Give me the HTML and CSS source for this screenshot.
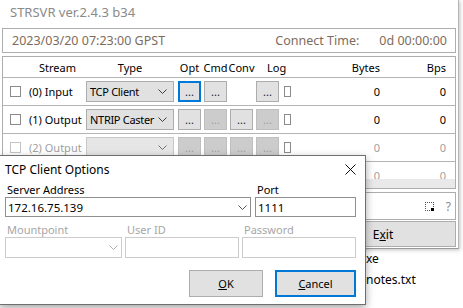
FILE: index.html
```html
<!DOCTYPE html>
<html lang="en">

<head>
    <meta charset="UTF-8">
    <title>STRSVR</title>
    <link rel="stylesheet" href="styles.css">
</head>

<body>

    <!-- Main window -->
    <div class="app">
        <div class="app-title">STRSVR ver.2.4.3 b34</div>

        <div class="timebar">
            <span>2023/03/20 07:23:00 GPST</span>
            <span class="conn"><span>Connect Time:</span><span>0d 00:00:00</span></span>
        </div>

        <!-- Streams table -->
        <div class="streams">
            <div class="rows">
                <div class="srow shead">
                    <span class="h-stream">Stream</span>
                    <span class="h-type">Type</span>
                    <span class="h-btn">Opt</span>
                    <span class="h-btn">Cmd</span>
                    <span class="h-btn">Conv</span>
                    <span class="h-log">Log</span>
                    <span class="num">Bytes</span>
                    <span class="num">Bps</span>
                </div>

                <div class="srow">
                    <span class="chk"></span>
                    <span class="name">(0) Input</span>
                    <div class="combo"><span>TCP Client</span><svg width="9" height="5" viewBox="0 0 9 5"><polyline points="0.5,0.5 4.5,4.5 8.5,0.5" fill="none" stroke="#404040"/></svg></div>
                    <button class="dots focus">...</button>
                    <button class="dots">...</button>
                    <span></span>
                    <button class="dots">...</button>
                    <span class="ind"></span>
                    <span class="num">0</span>
                    <span class="num">0</span>
                </div>

                <div class="srow">
                    <span class="chk"></span>
                    <span class="name">(1) Output</span>
                    <div class="combo"><span>NTRIP Caster</span><svg width="9" height="5" viewBox="0 0 9 5"><polyline points="0.5,0.5 4.5,4.5 8.5,0.5" fill="none" stroke="#404040"/></svg></div>
                    <button class="dots">...</button>
                    <button class="dots off">...</button>
                    <button class="dots">...</button>
                    <button class="dots off">...</button>
                    <span class="ind"></span>
                    <span class="num">0</span>
                    <span class="num">0</span>
                </div>

                <div class="srow off">
                    <span class="chk"></span>
                    <span class="name">(2) Output</span>
                    <div class="combo"><span></span><svg width="9" height="5" viewBox="0 0 9 5"><polyline points="0.5,0.5 4.5,4.5 8.5,0.5" fill="none" stroke="#707070"/></svg></div>
                    <button class="dots off">...</button>
                    <button class="dots off">...</button>
                    <button class="dots off">...</button>
                    <button class="dots off">...</button>
                    <span class="ind"></span>
                    <span class="num">0</span>
                    <span class="num">0</span>
                </div>

                <div class="srow off">
                    <span class="chk"></span>
                    <span class="name"></span>
                    <div class="combo"><span></span><svg width="9" height="5" viewBox="0 0 9 5"><polyline points="0.5,0.5 4.5,4.5 8.5,0.5" fill="none" stroke="#707070"/></svg></div>
                    <button class="dots off"></button>
                    <button class="dots off"></button>
                    <button class="dots off"></button>
                    <button class="dots off"></button>
                    <span class="ind"></span>
                    <span class="num">0</span>
                    <span class="num">0</span>
                </div>
            </div>
            <div class="hscroll"></div>
        </div>

        <div class="status">
            <span class="trace"></span>
            <span class="help">?</span>
        </div>

        <div class="actions">
            <button class="btn exit">E<u>x</u>it</button>
        </div>
    </div>

    <!-- Explorer behind -->
    <div class="files">
        <div>xe</div>
        <div>notes.txt</div>
    </div>

    <!-- TCP Client Options dialog -->
    <div class="dialog">
        <div class="dlg-title">
            <span>TCP Client Options</span>
            <svg width="11" height="11" viewBox="0 0 11 11"><path d="M0.5 0.5 L10.5 10.5 M10.5 0.5 L0.5 10.5" stroke="#111" stroke-width="1"/></svg>
        </div>
        <div class="dlg-body">
            <div class="field-row">
                <div class="field">
                    <label>Server Address</label>
                    <div class="box"><span>172.16.75.139</span><svg width="9" height="5" viewBox="0 0 9 5"><polyline points="0.5,0.5 4.5,4.5 8.5,0.5" fill="none" stroke="#555"/></svg></div>
                </div>
                <div class="field">
                    <label>Port</label>
                    <div class="box"><span>1111</span></div>
                </div>
            </div>
            <div class="field-row three">
                <div class="field off">
                    <label>Mountpoint</label>
                    <div class="box"><span></span><svg width="9" height="5" viewBox="0 0 9 5"><polyline points="0.5,0.5 4.5,4.5 8.5,0.5" fill="none" stroke="#b0b0b0"/></svg></div>
                </div>
                <div class="field off">
                    <label>User ID</label>
                    <div class="box"></div>
                </div>
                <div class="field off">
                    <label>Password</label>
                    <div class="box"></div>
                </div>
            </div>
            <div class="dlg-actions">
                <button class="btn ok"><u>O</u>K</button>
                <button class="btn cancel focus"><u>C</u>ancel</button>
            </div>
        </div>
    </div>

</body>

</html>
```

FILE: styles.css
```css
/* General */
* {
    box-sizing: border-box;
}

body {
    margin: 0;
    width: 463px;
    height: 308px;
    overflow: hidden;
    position: relative;
    background: #fff;
    font-family: "Noto Sans", sans-serif;
    font-size: 11px;
    color: #000;
    white-space: nowrap;
}

button {
    font-family: inherit;
    font-size: 11px;
    color: #000;
    padding: 0;
}

/* Main window */
.app {
    width: 459px;
    height: 249px;
    padding: 0 2px 0 2px;
    background: #fff;
    border-right: 1px solid #b5b5b5;
    border-bottom: 1px solid #9a9a9a;
    box-shadow: 1px 1px 4px rgba(0, 0, 0, 0.25);
}

.app-title {
    height: 28px;
    line-height: 25px;
    padding-left: 8px;
    font-size: 13px;
    color: #8a8a8a;
}

.timebar {
    height: 25px;
    border: 1px solid #adadad;
    display: flex;
    justify-content: space-between;
    align-items: center;
    padding: 0 8px 0 9px;
    font-size: 12.5px;
    color: #7d6c5c;
}

.conn {
    display: flex;
    gap: 20px;
}

/* Streams */
.streams {
    margin-top: 3px;
    height: 133px;
    border: 1px solid #adadad;
}

.rows {
    height: 122px;
    overflow: hidden;
}

.hscroll {
    height: 9px;
    background: #e9e9e9;
}

.srow {
    display: grid;
    grid-template-columns: 19px 57px 88px 27px 26px 26px 26px 12px 89px 66px;
    align-items: center;
    height: 28px;
    padding-left: 7px;
    border-bottom: 1px solid #b4b4b4;
    font-size: 11px;
}

.shead {
    height: 21px;
}

.h-stream {
    grid-column: 2;
    text-align: center;
}

.h-type {
    text-align: center;
}

.h-btn {
    justify-self: end;
    width: 23px;
    display: flex;
    justify-content: center;
}

.h-log {
    grid-column: span 2;
    padding-left: 14px;
}

.num {
    text-align: right;
}

.chk {
    width: 11px;
    height: 11px;
    border: 1px solid #8b8b8b;
    background: #fff;
}

.combo {
    height: 21px;
    border: 1px solid #adadad;
    background: #e1e1e1;
    display: flex;
    align-items: center;
    justify-content: space-between;
    padding: 0 6px 0 3px;
    overflow: hidden;
    letter-spacing: -0.3px;
}

.dots {
    justify-self: end;
    width: 23px;
    height: 21px;
    border: 1px solid #adadad;
    background: #e1e1e1;
    font-size: 11px;
    line-height: 14px;
    color: #1b1b3a;
}

.dots.focus {
    border: 2px solid #0078d7;
}

.dots.off {
    background: #cccccc;
    border-color: #bfbfbf;
    color: #a0a0a0;
}

.ind {
    justify-self: end;
    width: 7px;
    height: 11px;
    border: 1px solid #8b8b8b;
}

.srow.off {
    color: #a0a0a0;
}

.srow.off .chk {
    border-color: #c4c4c4;
}

.srow.off .combo {
    background: #e6e6e6;
    border-color: #c8c8c8;
}

/* Status + buttons */
.status {
    margin-top: 3px;
    height: 28px;
    border: 1px solid #adadad;
    display: flex;
    justify-content: flex-end;
    align-items: center;
    gap: 12px;
    padding-right: 4px;
}

.trace {
    position: relative;
    width: 9px;
    height: 9px;
    border: 1px dotted #555;
}

.trace::after {
    content: "";
    position: absolute;
    right: -1px;
    bottom: -1px;
    width: 3px;
    height: 3px;
    background: #000;
}

.help {
    color: #8a8a8a;
    font-size: 12px;
}

.actions {
    margin-top: 1px;
    display: flex;
    justify-content: flex-end;
}

.btn {
    background: #e1e1e1;
    border: 1px solid #adadad;
}

.exit {
    width: 146px;
    height: 26px;
    font-size: 12px;
}

/* Explorer behind */
.files {
    margin: -1px 0 0 366px;
    font-size: 12px;
    line-height: 21px;
}

/* Dialog */
.dialog {
    position: absolute;
    left: -1px;
    top: 155px;
    width: 367px;
    height: 150px;
    background: #fff;
    border: 1px solid #6f6f6f;
    box-shadow: 0 3px 8px rgba(0, 0, 0, 0.35);
}

.dlg-title {
    height: 26px;
    display: flex;
    justify-content: space-between;
    align-items: center;
    padding: 0 9px 0 5px;
    font-size: 12px;
}

.dlg-body {
    padding: 0 9px 0 5px;
}

.field-row {
    display: grid;
    grid-template-columns: 246px 101px;
    column-gap: 4px;
}

.field-row.three {
    grid-template-columns: 117px 114px 114px;
    column-gap: 3px;
    margin-top: 5px;
}

.field label {
    display: block;
    height: 15px;
    line-height: 15px;
    padding-left: 2px;
}

.field .box {
    height: 20px;
    border: 1px solid #8f8f8f;
    display: flex;
    align-items: center;
    justify-content: space-between;
    padding: 0 3px 0 2px;
    font-size: 11.5px;
}

.field.off label {
    color: #a6a6a6;
}

.field.off .box {
    height: 21px;
    border-color: #cccccc;
}

.dlg-actions {
    display: flex;
    justify-content: flex-end;
    gap: 12px;
    margin-top: 12px;
}

.ok {
    width: 74px;
    height: 27px;
}

.cancel {
    width: 81px;
    height: 27px;
}

.btn.focus {
    border: 2px solid #0078d7;
}
```
